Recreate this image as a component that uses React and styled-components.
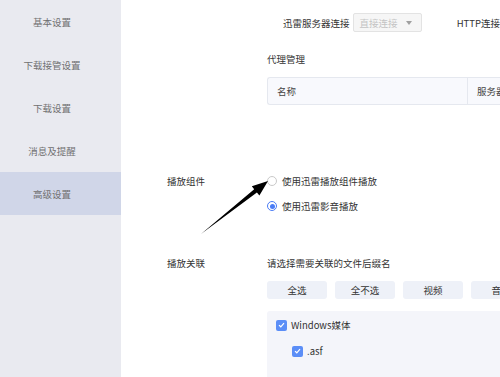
import React from 'react';
import styled, { createGlobalStyle } from 'styled-components';

const GlobalStyle = createGlobalStyle`
  html, body {
    margin: 0;
    padding: 0;
    background: #ffffff;
    overflow: hidden;
  }
  body {
    font-family: "Noto Sans CJK SC", "Noto Sans", sans-serif;
    font-size: 9.5px;
    color: #333333;
  }
`;

const Page = styled.div`
  position: relative;
  display: flex;
  width: 500px;
  height: 377px;
  overflow: hidden;
`;

const Sidebar = styled.nav`
  flex: 0 0 121px;
  display: flex;
  flex-direction: column;
  background: #e9eaf0;
`;

const NavItem = styled.div`
  height: 43px;
  display: flex;
  align-items: center;
  justify-content: center;
  padding-right: 17px;
  color: #707070;
  background: ${p => (p.active ? '#d0d6e8' : 'transparent')};
`;

const Main = styled.main`
  flex: 1;
  min-width: 0;
  padding: 13px 0 0 46px;
  white-space: nowrap;
`;

const Section = styled.section`
  display: grid;
  grid-template-columns: 100px 1fr;
  margin-top: ${p => p.gap || 0}px;
`;

const Label = styled.div`
  line-height: 14px;
  color: #333;
`;

const Content = styled.div`
  display: flex;
  flex-direction: column;
  min-width: 0;
`;

const InlineRow = styled.div`
  display: flex;
  align-items: center;
  height: 19px;
  padding-left: 16px;
`;

const InlineText = styled.span`
  color: #333;
  margin-right: ${p => p.mr || 0}px;
`;

const Select = styled.div`
  width: 77px;
  height: 19px;
  box-sizing: border-box;
  border: 1px solid #e3e3e3;
  border-radius: 2px;
  background: #f6f6f6;
  display: flex;
  align-items: center;
  justify-content: space-between;
  padding: 0 9px 0 6px;
  color: #c4c4c4;
  margin-right: 35px;
`;

const Caret = styled.span`
  width: 0;
  height: 0;
  border-left: 3.5px solid transparent;
  border-right: 3.5px solid transparent;
  border-top: 4px solid #a0a0a0;
`;

const Text = styled.div`
  line-height: 14px;
  color: #333;
  margin-top: ${p => p.mt || 0}px;
`;

const Table = styled.div`
  display: flex;
  height: 28px;
  box-sizing: border-box;
  margin-top: 11px;
  border: 1px solid #e5e8ef;
  border-right: none;
  border-radius: 3px 0 0 3px;
  background: #f8f9fd;
`;

const HeadCell = styled.div`
  display: flex;
  align-items: center;
  padding-left: 9px;
  width: ${p => p.w || 'auto'};
  flex: ${p => (p.w ? '0 0 auto' : 1)};
  box-sizing: border-box;
  border-left: ${p => (p.divider ? '1px solid #e5e8ef' : 'none')};
  color: #444;
`;

const RadioList = styled.div`
  display: flex;
  flex-direction: column;
  gap: 11px;
`;

const RadioRow = styled.label`
  display: flex;
  align-items: center;
  height: 14px;
  gap: 5px;
  color: #333;
`;

const Radio = styled.span`
  width: 10px;
  height: 10px;
  box-sizing: border-box;
  border-radius: 50%;
  border: 1px solid ${p => (p.checked ? '#4a7cf6' : '#c9c9c9')};
  background: #fff;
  display: flex;
  align-items: center;
  justify-content: center;
  &::after {
    content: '';
    width: 5px;
    height: 5px;
    border-radius: 50%;
    background: ${p => (p.checked ? '#4a7cf6' : 'transparent')};
  }
`;

const ButtonRow = styled.div`
  display: flex;
  gap: 8px;
  margin-top: 11px;
`;

const Button = styled.div`
  flex: 0 0 60px;
  height: 18px;
  border-radius: 3px;
  background: #eef1f8;
  color: #333;
  display: flex;
  align-items: center;
  justify-content: center;
`;

const TypeBox = styled.div`
  margin-top: 12px;
  height: 80px;
  background: #f4f5fa;
  border-radius: 3px 0 0 0;
  padding: 7px 0 0 9px;
  display: flex;
  flex-direction: column;
  gap: 12px;
`;

const CheckRow = styled.div`
  display: flex;
  align-items: center;
  height: 14px;
  gap: 4px;
  padding-left: ${p => p.indent || 0}px;
  color: #333;
`;

const Check = styled.span`
  width: 11px;
  height: 11px;
  border-radius: 2px;
  background: #5b8ef7;
  display: flex;
  align-items: center;
  justify-content: center;
`;

const ArrowLayer = styled.svg`
  position: absolute;
  left: 0;
  top: 0;
  pointer-events: none;
`;

const navItems = ['基本设置', '下载接管设置', '下载设置', '消息及提醒', '高级设置'];

const CheckMark = () => (
  <svg width="7" height="6" viewBox="0 0 7 6">
    <path d="M1 3.1 L2.8 4.8 L6 1.2" fill="none" stroke="#fff" strokeWidth="1.2" />
  </svg>
);

export default function App() {
  return (
    <Page>
      <GlobalStyle />
      <Sidebar>
        {navItems.map(item => (
          <NavItem key={item} active={item === '高级设置'}>{item}</NavItem>
        ))}
      </Sidebar>

      <Main>
        <Section>
          <div />
          <Content>
            <InlineRow>
              <InlineText mr={3}>迅雷服务器连接</InlineText>
              <Select>
                <span>直接连接</span>
                <Caret />
              </Select>
              <InlineText>HTTP连接</InlineText>
            </InlineRow>
            <Text mt={20}>代理管理</Text>
            <Table>
              <HeadCell w="199px">名称</HeadCell>
              <HeadCell divider>服务器</HeadCell>
            </Table>
          </Content>
        </Section>

        <Section gap={69}>
          <Label>播放组件</Label>
          <RadioList>
            <RadioRow>
              <Radio />
              使用迅雷播放组件播放
            </RadioRow>
            <RadioRow>
              <Radio checked />
              使用迅雷影音播放
            </RadioRow>
          </RadioList>
        </Section>

        <Section gap={43}>
          <Label>播放关联</Label>
          <Content>
            <Text>请选择需要关联的文件后缀名</Text>
            <ButtonRow>
              <Button>全选</Button>
              <Button>全不选</Button>
              <Button>视频</Button>
              <Button>音频</Button>
            </ButtonRow>
            <TypeBox>
              <CheckRow>
                <Check><CheckMark /></Check>
                Windows媒体
              </CheckRow>
              <CheckRow indent={16}>
                <Check><CheckMark /></Check>
                .asf
              </CheckRow>
            </TypeBox>
          </Content>
        </Section>
      </Main>

      <ArrowLayer width="500" height="377" viewBox="0 0 500 377">
        <polygon
          points="201,234 254.2,189.3 251.8,186.2 268,181 259.4,195.4 256.9,192.5"
          fill="#000"
        />
      </ArrowLayer>
    </Page>
  );
}
